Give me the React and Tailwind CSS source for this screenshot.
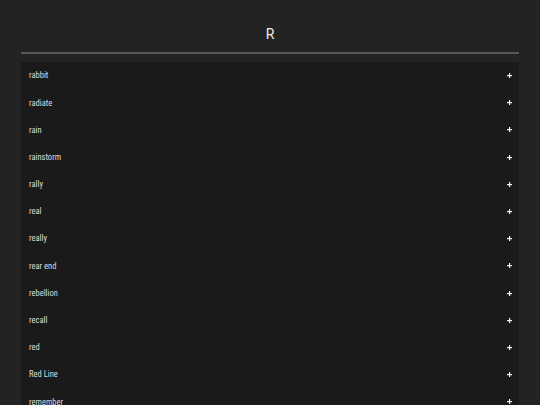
import React from 'react';

const words = [
  'rabbit',
  'radiate',
  'rain',
  'rainstorm',
  'rally',
  'real',
  'really',
  'rear end',
  'rebellion',
  'recall',
  'red',
  'Red Line',
  'remember',
  'remind',
];

function Row({ word }) {
  return (
    <div className="flex h-[27.2px] shrink-0 items-center justify-between pl-2 pr-[8px]">
      <span
        className="text-[8.5px] leading-none text-[#dddddd]"
        style={{ fontFamily: '"Roboto Condensed", "Liberation Sans Narrow", Roboto, sans-serif' }}
      >
        {word}
      </span>
      <svg width="5" height="5" viewBox="0 0 5 5" className="mr-[-1px]">
        <rect x="2" y="0" width="1.2" height="5" fill="#f2f2f2" />
        <rect x="0" y="2" width="5" height="1.2" fill="#f2f2f2" />
      </svg>
    </div>
  );
}

export default function App() {
  return (
    <div
      className="h-[405px] overflow-hidden bg-[#232323] px-[21px]"
      style={{ fontFamily: 'Roboto, "Liberation Sans", sans-serif' }}
    >
      <div className="flex h-[52px] items-center justify-center pt-[16px]">
        <h1 className="text-[14px] leading-none text-[#eeeeee]">R</h1>
      </div>
      <div className="h-[2px] bg-[#575757]" />
      <div className="mt-[8px] flex flex-col rounded-t-[2px] bg-[#1a1a1a]">
        {words.map((w) => (
          <Row key={w} word={w} />
        ))}
      </div>
    </div>
  );
}
